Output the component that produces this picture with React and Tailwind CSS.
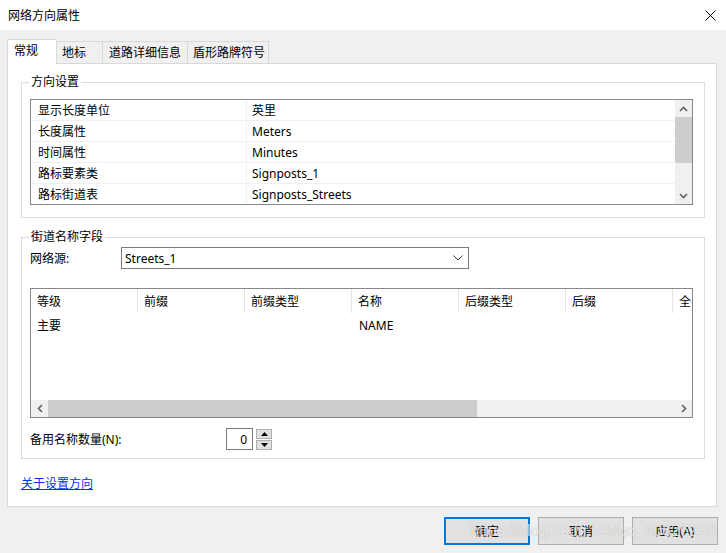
import React from "react";

const Up = () => (
  <svg width="9" height="6" viewBox="0 0 9 6"><path d="M1 5 L4.5 1.5 L8 5" fill="none" stroke="#606060" strokeWidth="1.6" /></svg>
);
const Down = () => (
  <svg width="9" height="6" viewBox="0 0 9 6"><path d="M1 1 L4.5 4.5 L8 1" fill="none" stroke="#606060" strokeWidth="1.6" /></svg>
);
const Left = () => (
  <svg width="6" height="9" viewBox="0 0 6 9"><path d="M5 1 L1.5 4.5 L5 8" fill="none" stroke="#606060" strokeWidth="1.6" /></svg>
);
const Right = () => (
  <svg width="6" height="9" viewBox="0 0 6 9"><path d="M1 1 L4.5 4.5 L1 8" fill="none" stroke="#606060" strokeWidth="1.6" /></svg>
);

function Group({ title, className, children }) {
  return (
    <div className={"relative border border-[#dcdcdc] w-[684px] " + className}>
      <span className="absolute -top-[9px] left-[7px] bg-white px-[2px] leading-[16px]">{title}</span>
      {children}
    </div>
  );
}

const rows = [
  ["显示长度单位", "英里"],
  ["长度属性", "Meters"],
  ["时间属性", "Minutes"],
  ["路标要素类", "Signposts_1"],
  ["路标街道表", "Signposts_Streets"],
];

const cols = ["等级", "前缀", "前缀类型", "名称", "后缀类型", "后缀", "全名"];

export default function App() {
  return (
    <div className="relative w-[726px] h-[553px] bg-[#f0f0f0] flex flex-col text-[12px] leading-[16px] text-black font-['Noto_Sans','Noto_Sans_CJK_SC',sans-serif] overflow-hidden">
      {/* title bar */}
      <div className="h-[30px] bg-white flex items-center justify-between pl-[8px] pr-[10px] pt-[1px] shrink-0">
        <span>网络方向属性</span>
        <svg width="11" height="11" viewBox="0 0 11 11"><path d="M0.5 0.5 L10.5 10.5 M10.5 0.5 L0.5 10.5" stroke="#000" strokeWidth="1" /></svg>
      </div>

      <div className="pl-[7px] pt-[9px] flex flex-col">
        {/* tabs */}
        <div className="flex items-end h-[24px]">
          <div className="w-[50px] h-[25px] bg-white border border-[#d9d9d9] border-b-0 pl-[6px] pt-[3px] relative z-10 -mb-px">常规</div>
          <div className="w-[46px] h-[22px] bg-[#f0f0f0] border border-[#d9d9d9] border-l-0 border-b-0 pl-[5px] pt-[3px]">地标</div>
          <div className="w-[85px] h-[22px] bg-[#f0f0f0] border border-[#d9d9d9] border-l-0 border-b-0 pl-[6px] pt-[3px]">道路详细信息</div>
          <div className="w-[81px] h-[22px] bg-[#f0f0f0] border border-[#d9d9d9] border-l-0 border-b-0 pl-[5px] pt-[3px]">盾形路牌符号</div>
        </div>

        {/* panel */}
        <div className="w-[710px] h-[444px] bg-white border border-[#d9d9d9] pl-[13px] pt-[18px] flex flex-col">
          <Group title="方向设置" className="h-[136px] pl-[8px] pt-[16px]">
            <div className="w-[663px] h-[106px] border border-[#828790] flex overflow-hidden">
              <div className="flex-1 flex flex-col">
                {rows.map(([k, v]) => (
                  <div key={k} className="h-[21px] shrink-0 border-b border-[#f0f0f0] flex">
                    <div className="w-[216px] h-full border-r border-[#f0f0f0] pl-[7px] pt-[3px]">{k}</div>
                    <div className="pl-[5px] pt-[3px]">{v}</div>
                  </div>
                ))}
              </div>
              <div className="w-[17px] bg-[#f0f0f0] flex flex-col">
                <div className="h-[17px] flex items-center justify-center"><Up /></div>
                <div className="h-[46px] bg-[#cdcdcd]" />
                <div className="flex-1" />
                <div className="h-[17px] flex items-center justify-center"><Down /></div>
              </div>
            </div>
          </Group>

          <Group title="街道名称字段" className="h-[222px] mt-[19px] pl-[8px] pt-[9px]">
            <div className="flex items-center h-[22px]">
              <div className="w-[91px] pt-[1px]">网络源:</div>
              <div className="w-[348px] h-[22px] border border-[#7a7a7a] flex items-center justify-between pl-[3px] pr-[5px]">
                <span className="pt-[1px]">Streets_1</span>
                <svg width="10" height="6" viewBox="0 0 10 6"><path d="M0.5 0.5 L5 5 L9.5 0.5" fill="none" stroke="#333" strokeWidth="1" /></svg>
              </div>
            </div>

            <div className="mt-[19px] w-[663px] h-[130px] border border-[#828790] flex flex-col overflow-hidden">
              <div className="flex h-[24px] shrink-0">
                {cols.map((c) => (
                  <div key={c} className="w-[107px] shrink-0 border-r border-[#e5e5e5] pl-[6px] pt-[5px] whitespace-nowrap">{c}</div>
                ))}
              </div>
              <div className="flex h-[24px] shrink-0 items-center pt-[1px]">
                <div className="w-[107px] shrink-0 pl-[6px]">主要</div>
                <div className="w-[107px] shrink-0" />
                <div className="w-[107px] shrink-0" />
                <div className="w-[107px] shrink-0 pl-[7px]">NAME</div>
              </div>
              <div className="flex-1" />
              <div className="h-[17px] bg-[#f0f0f0] flex shrink-0">
                <div className="w-[17px] flex items-center justify-center"><Left /></div>
                <div className="w-[429px] bg-[#cdcdcd]" />
                <div className="flex-1" />
                <div className="w-[17px] flex items-center justify-center"><Right /></div>
              </div>
            </div>

            <div className="mt-[10px] flex items-center h-[22px]">
              <div className="w-[196px] pt-[1px]">备用名称数量(N):</div>
              <div className="w-[27px] h-[22px] border border-[#7a7a7a] flex items-center justify-end pr-[5px] pt-[1px]">0</div>
              <div className="ml-[3px] flex flex-col gap-[1px]">
                <div className="w-[16px] h-[10px] bg-[#e1e1e1] border border-[#adadad] flex items-center justify-center">
                  <svg width="7" height="4" viewBox="0 0 7 4"><path d="M0 4 L3.5 0 L7 4Z" fill="#000" /></svg>
                </div>
                <div className="w-[16px] h-[10px] bg-[#e1e1e1] border border-[#adadad] flex items-center justify-center">
                  <svg width="7" height="4" viewBox="0 0 7 4"><path d="M0 0 L3.5 4 L7 0Z" fill="#000" /></svg>
                </div>
              </div>
            </div>
          </Group>

          <div className="mt-[17px]">
            <span className="text-[#0033ee] underline">关于设置方向</span>
          </div>
        </div>
      </div>

      {/* buttons */}
      <div className="mt-[10px] flex justify-end gap-[8px] pr-[8px]">
        <div className="w-[86px] h-[28px] bg-[#e1e1e1] border-2 border-[#0078d7] flex items-center justify-center pt-[1px]">确定</div>
        <div className="w-[86px] h-[28px] bg-[#e1e1e1] border border-[#adadad] flex items-center justify-center pt-[1px]">取消</div>
        <div className="w-[86px] h-[28px] bg-[#e1e1e1] border border-[#adadad] flex items-center justify-center pt-[1px]">应用(A)</div>
      </div>

      <span className="absolute left-[470px] top-[521px] text-[16px] leading-[20px] font-['Liberation_Sans',sans-serif] text-white/75 [text-shadow:0_0_1px_rgba(0,0,0,0.3)] whitespace-nowrap pointer-events-none">https://blog.csdn.net/qq_40826258</span>
    </div>
  );
}
